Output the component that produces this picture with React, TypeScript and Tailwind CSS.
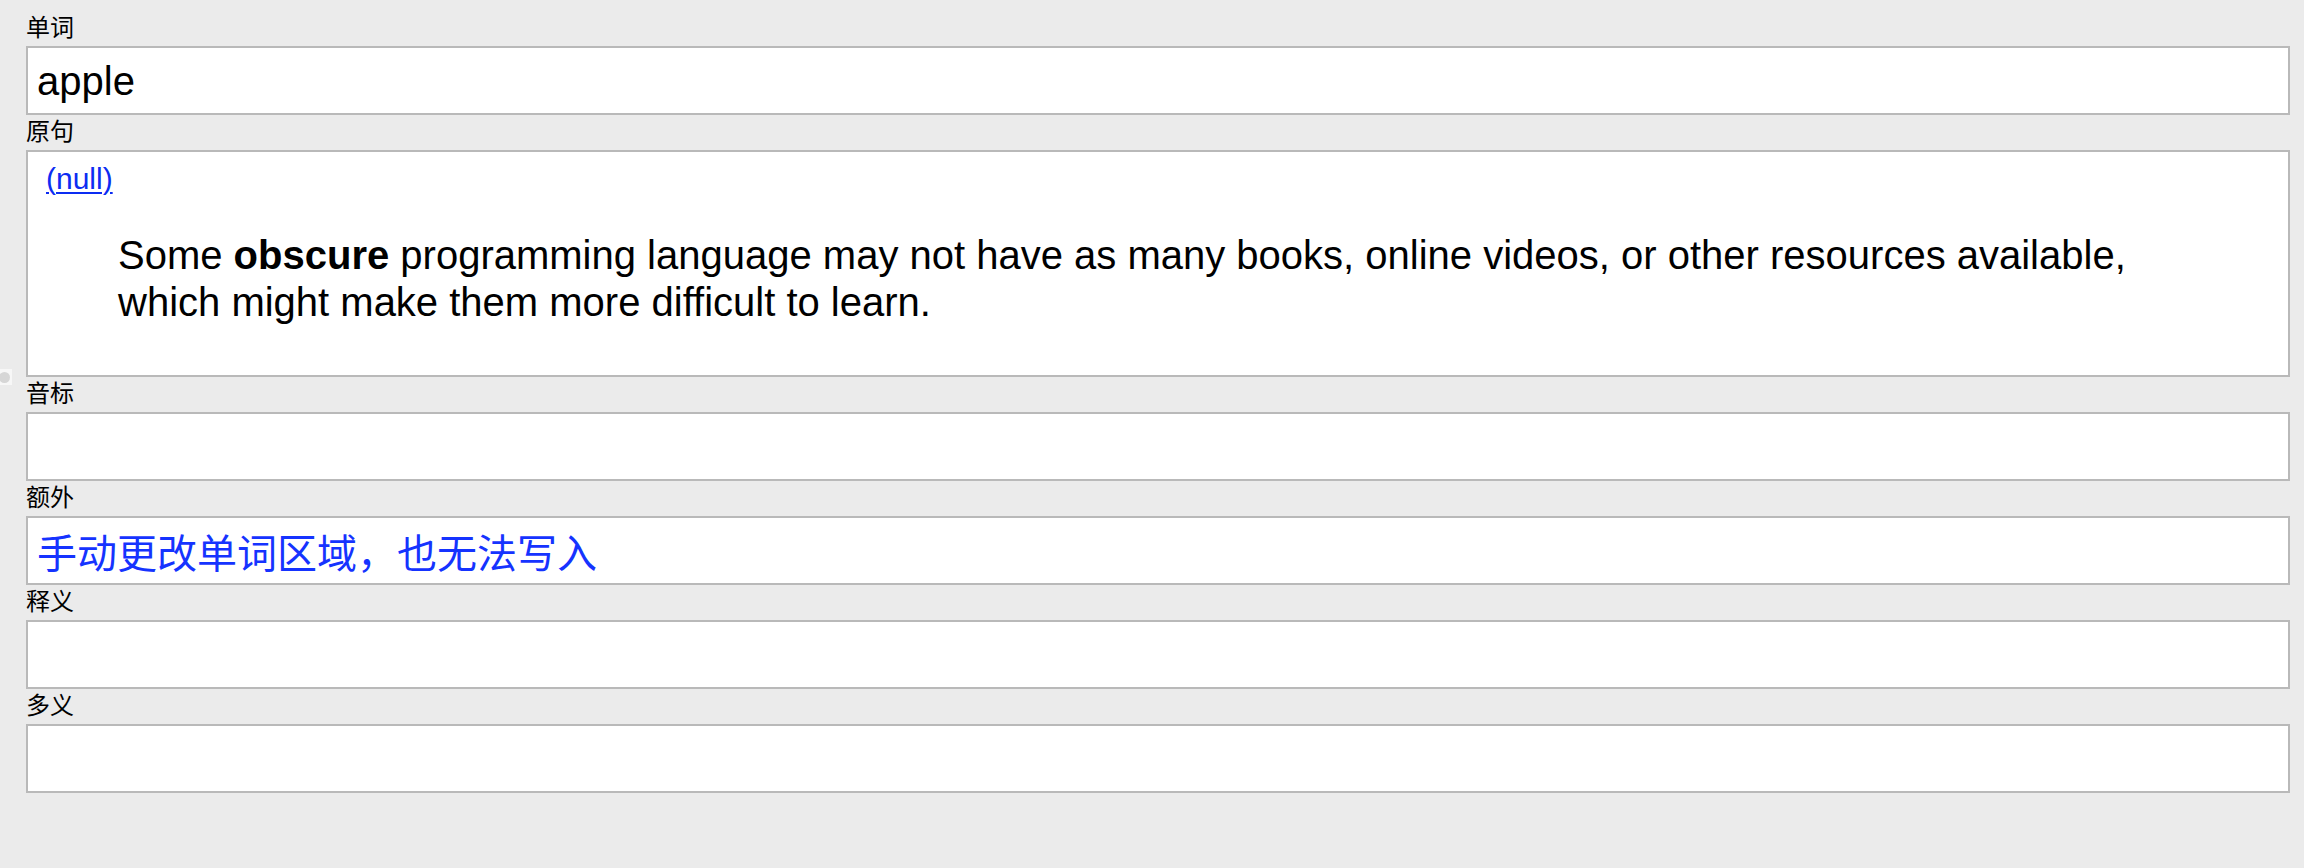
import React from 'react';

interface Field {
  label: string;
  value?: React.ReactNode;
  tall?: boolean;
}

const sans = { fontFamily: '"Liberation Sans", Arial, sans-serif' };

const Sentence: React.FC = () => (
  <div className="h-full pl-[18px] pt-[11px]">
    <div className="text-[30px] leading-[32px]">
      <a href="#" className="text-[#0c2cf2] underline decoration-2 underline-offset-[3px]">
        (null)
      </a>
    </div>
    <p className="mt-[37px] pl-[72px] text-[40px] leading-[47px] text-black">
      Some <b>obscure</b> programming language may not have as many books, online videos, or other resources available,
      <br />
      which might make them more difficult to learn.
    </p>
  </div>
);

const fields: Field[] = [
  { label: '单词', value: <span className="text-black">apple</span> },
  { label: '原句', tall: true },
  { label: '音标' },
  {
    label: '额外',
    value: (
      <span
        className="text-[#1533ff]"
        style={{ fontFamily: '"Noto Sans CJK SC", "Liberation Sans", sans-serif' }}
      >
        手动更改单词区域，也无法写入
      </span>
    ),
  },
  { label: '释义' },
  { label: '多义' },
];

const App: React.FC = () => (
  <div className="relative h-[868px] w-[2304px] overflow-hidden bg-[#ebebeb] pt-[11px]" style={sans}>
    <div className="ml-[26px] flex w-[2264px] flex-col">
      {fields.map(({ label, value, tall }) => (
        <div key={label} className="flex flex-col">
          <div
            className="h-[35px] text-[24px] leading-[30px] text-black"
            style={{ fontFamily: '"Noto Sans CJK SC", sans-serif' }}
          >
            {label}
          </div>
          <div
            className={
              tall
                ? 'h-[227px] border-2 border-[#b9b9b9] bg-white'
                : 'flex h-[69px] items-center border-2 border-[#b9b9b9] bg-white pl-[9px] text-[40px] leading-[46px]'
            }
          >
            {tall ? <Sentence /> : value}
          </div>
        </div>
      ))}
    </div>
    <div className="absolute left-0 top-[369px] flex h-[16px] w-[12px] items-center bg-[#f7f7f7]">
      <div className="-ml-[1px] h-[11px] w-[11px] rounded-full bg-[#d6d6d6]" />
    </div>
  </div>
);

export default App;
